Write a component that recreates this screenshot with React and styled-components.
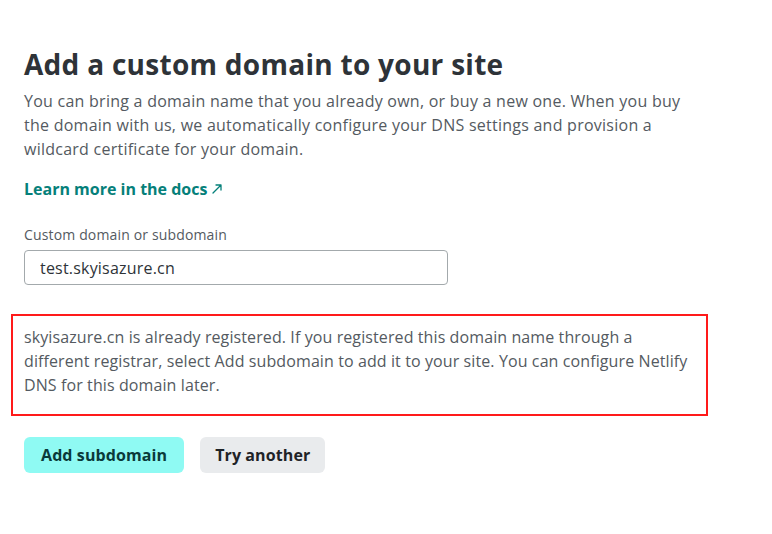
import React from "react";
import styled, { createGlobalStyle } from "styled-components";

const Global = createGlobalStyle`
  html, body { margin: 0; padding: 0; background: #fff; }
  body { font-family: "Open Sans", "Noto Sans", sans-serif; color: #2e3338; }
  * { box-sizing: border-box; }
`;

const Page = styled.main`
  width: 772px;
  height: 534px;
  padding: 44px 0 0 24px;
  display: flex;
  flex-direction: column;
`;

const Title = styled.h1`
  margin: 0 0 5px;
  font-size: 28px;
  line-height: 40px;
  font-weight: 700;
  letter-spacing: 0.28px;
  color: #2e3338;
`;

const Lead = styled.p`
  margin: 0;
  width: 676px;
  font-size: 16px;
  line-height: 24px;
  letter-spacing: 0.25px;
  color: #545a61;
`;

const DocsLink = styled.a`
  margin-top: 16px;
  font-size: 16px;
  line-height: 24px;
  font-weight: 700;
  color: #05807a;
  text-decoration: none;
  display: inline-flex;
  align-items: center;
  gap: 4px;
  align-self: flex-start;
`;

const Field = styled.div`
  margin-top: 24px;
  display: flex;
  flex-direction: column;
  gap: 5px;
`;

const Label = styled.label`
  font-size: 14px;
  line-height: 20px;
  letter-spacing: 0.15px;
  color: #545a61;
`;

const Input = styled.input`
  width: 424px;
  height: 35px;
  border: 1px solid #a3a9ac;
  border-radius: 4px;
  padding: 0 15px;
  font-family: inherit;
  font-size: 16px;
  letter-spacing: 0.2px;
  color: #2e3338;
  outline: none;
`;

const Notice = styled.div`
  margin: 29px 0 0 -13px;
  width: 697px;
  border: 2px solid #ff1a1a;
  padding: 9px 11px 17px 11px;
`;

const NoticeText = styled.p`
  margin: 0;
  width: 666px;
  font-size: 16px;
  line-height: 24px;
  letter-spacing: 0.1px;
  color: #545a61;
`;

const Actions = styled.div`
  margin-top: 21px;
  display: flex;
  gap: 16px;
`;

const Button = styled.button`
  height: 36px;
  padding: 0 ${(p) => (p.$primary ? "17px" : "15px")};
  border: none;
  border-radius: 6px;
  font-family: inherit;
  font-size: 16px;
  font-weight: 700;
  letter-spacing: 0.1px;
  background: ${(p) => (p.$primary ? "#8ffaf3" : "#e9ebed")};
  color: ${(p) => (p.$primary ? "#0a3a3a" : "#1f2327")};
  cursor: pointer;
`;

function ArrowIcon() {
  return (
    <svg width="12" height="12" viewBox="0 0 12 12" fill="none">
      <path d="M2 10 L10 2 M5 2 H10 V7" stroke="#05807a" strokeWidth="1.3" strokeLinecap="round" strokeLinejoin="round" />
    </svg>
  );
}

export default function App() {
  return (
    <>
      <Global />
      <Page>
        <Title>Add a custom domain to your site</Title>
        <Lead>
          You can bring a domain name that you already own, or buy a new one. When you buy the domain
          with us, we automatically configure your DNS settings and provision a wildcard certificate
          for your domain.
        </Lead>
        <DocsLink href="#">
          Learn more in the docs <ArrowIcon />
        </DocsLink>
        <Field>
          <Label>Custom domain or subdomain</Label>
          <Input defaultValue="test.skyisazure.cn" />
        </Field>
        <Notice>
          <NoticeText>
            skyisazure.cn is already registered. If you registered this domain name through a different
            registrar, select Add subdomain to add it to your site. You can configure Netlify DNS for
            this domain later.
          </NoticeText>
        </Notice>
        <Actions>
          <Button $primary>Add subdomain</Button>
          <Button>Try another</Button>
        </Actions>
      </Page>
    </>
  );
}
